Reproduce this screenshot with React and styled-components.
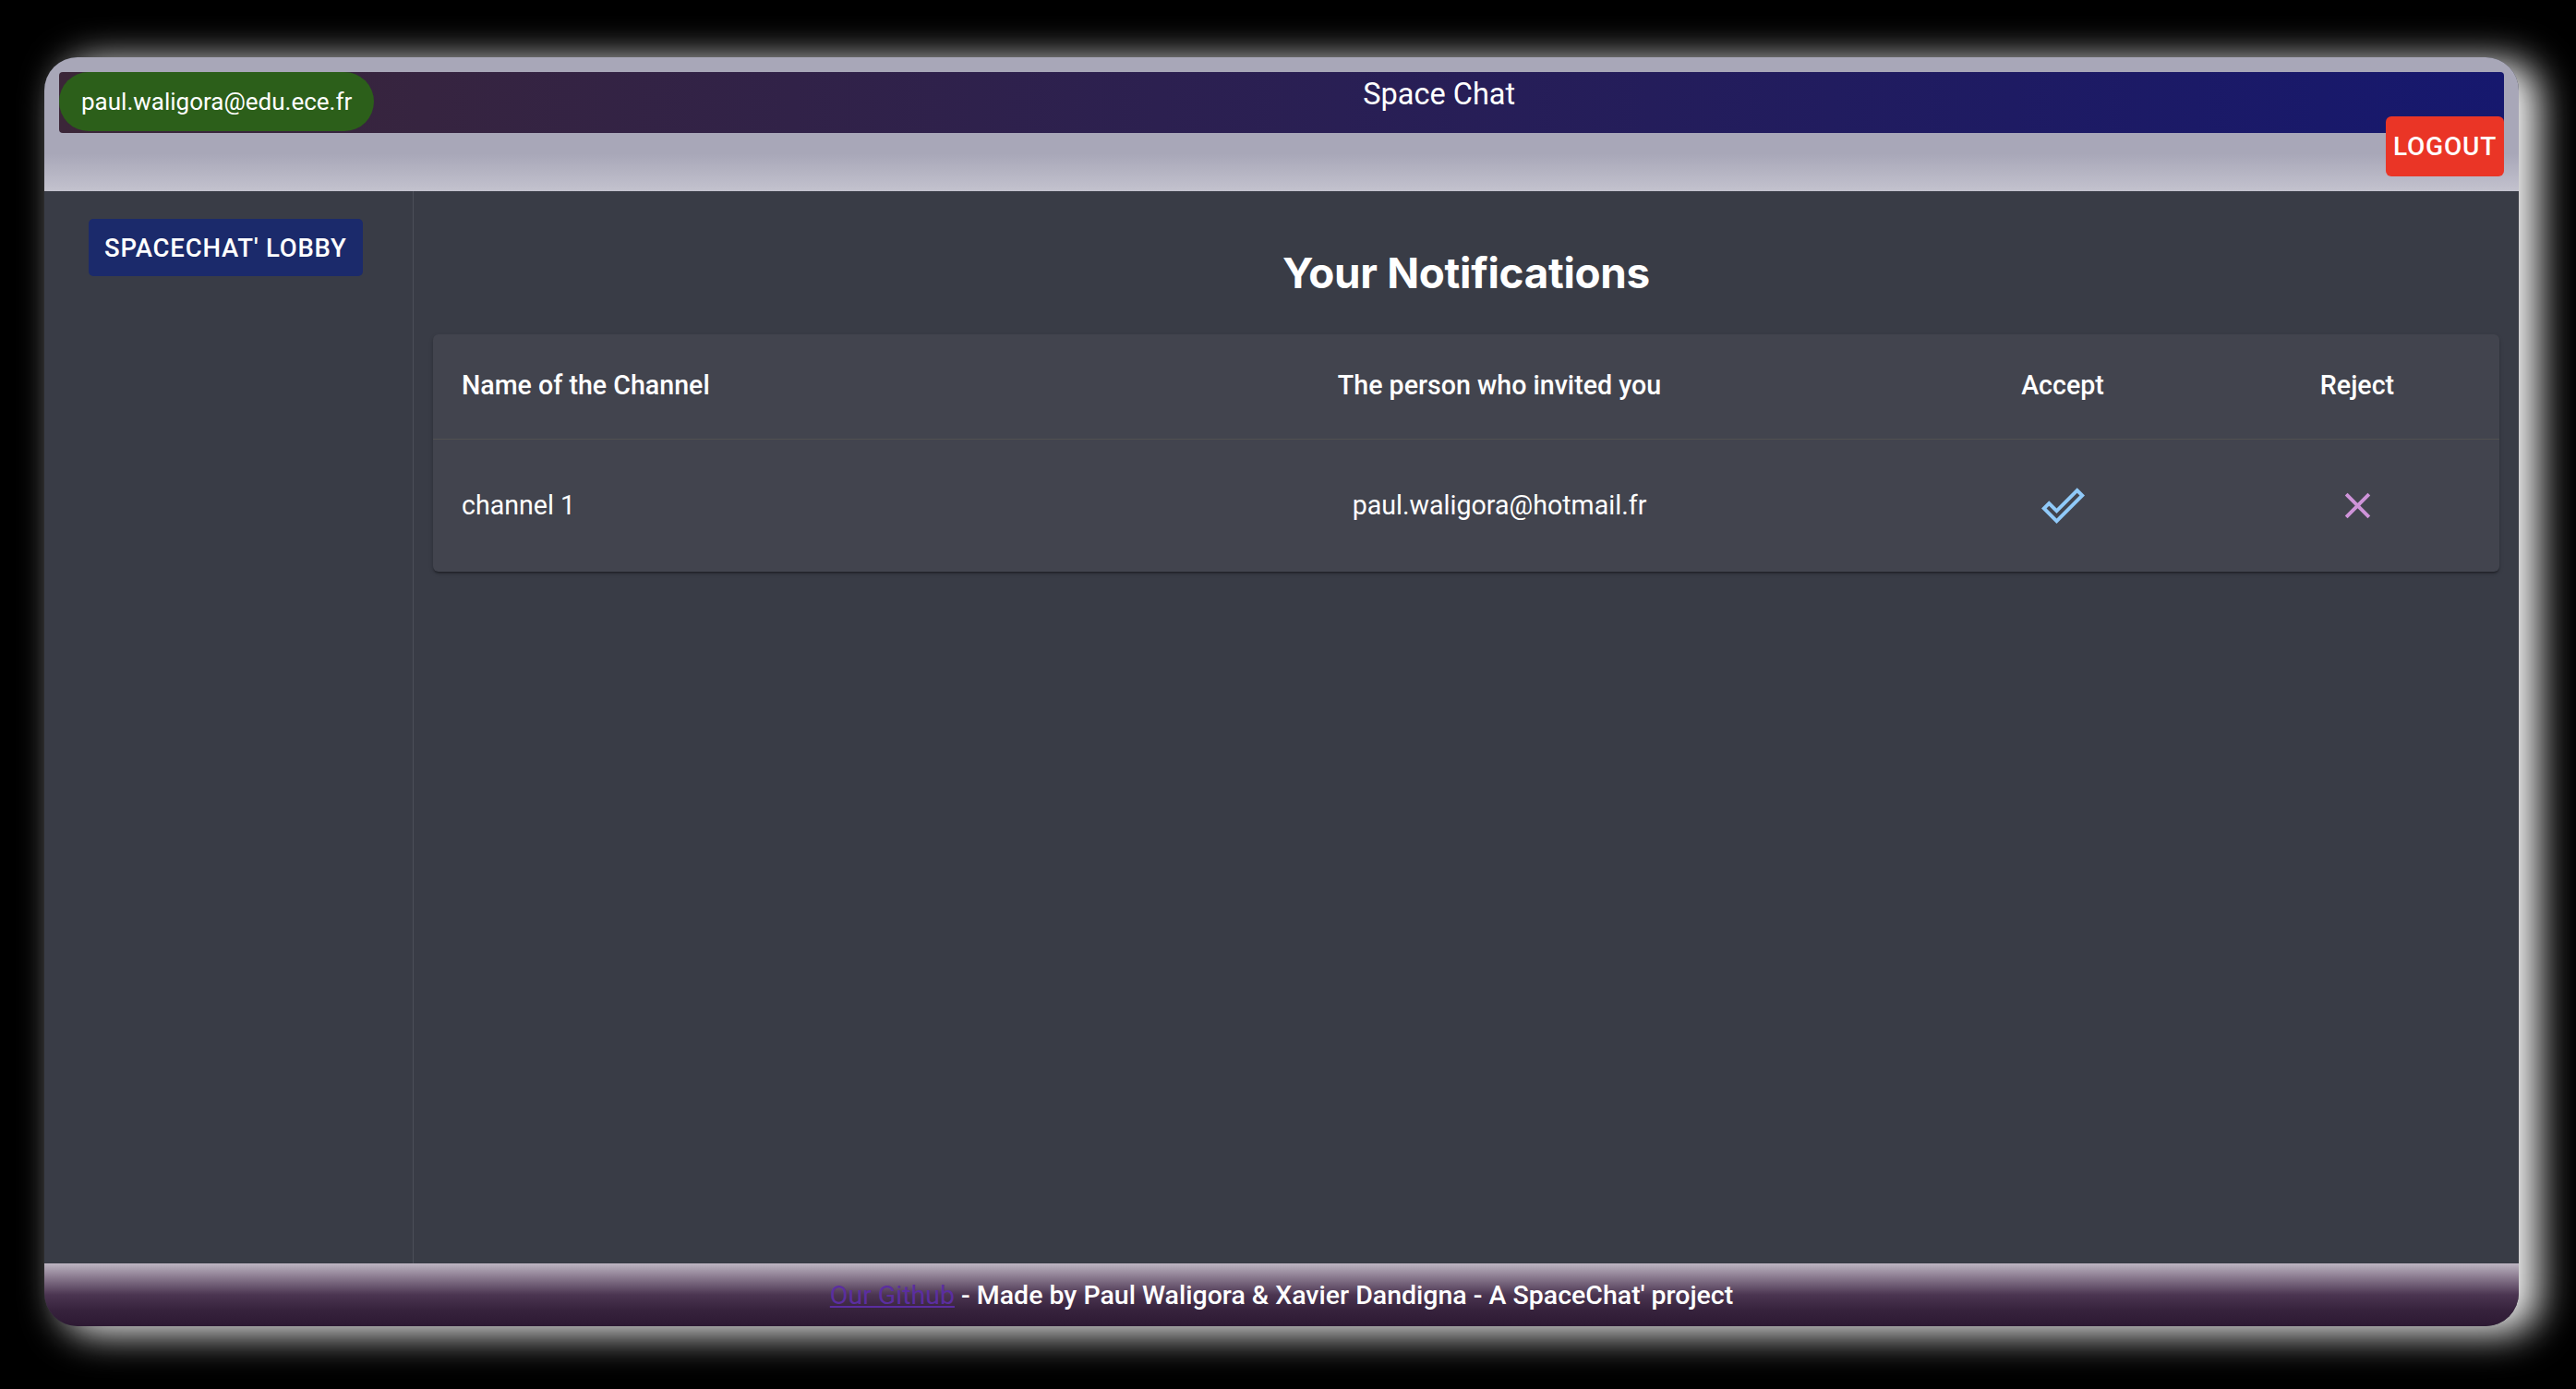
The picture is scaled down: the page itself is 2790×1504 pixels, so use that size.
import React from 'react';
import styled, { createGlobalStyle } from 'styled-components';

const GlobalStyle = createGlobalStyle`
  html, body {
    margin: 0;
    padding: 0;
    background: #000;
    font-family: Roboto, "Noto Sans", sans-serif;
    color: #fff;
  }
  * { box-sizing: border-box; }
`

const Page = styled.div`
  min-height: 100vh;
  display: flex;
  padding: 62px 62px 68px 48px;
  background: #000;
`
const Frame = styled.div`
  flex: 1;
  display: flex;
  flex-direction: column;
  border-radius: 36px;
  overflow: hidden;
  background: #393c46;
  box-shadow: 20px 6px 40px 2px rgba(255, 255, 255, 0.95);
`
const Header = styled.header`
  display: flex;
  flex-direction: column;
  padding: 16px;
  background: linear-gradient(180deg, #a8a7b8 0%, #a8a7b8 72%, #c3c2ce 100%);
`
const Bar = styled.div`
  display: flex;
  align-items: flex-start;
  height: 66px;
  border-radius: 4px;
  background: linear-gradient(90deg, #3b2638 0%, #2c2050 45%, #16186e 100%);
`
const UserPill = styled.div`
  height: 64px;
  display: flex;
  align-items: center;
  padding: 0 24px;
  border-radius: 32px;
  background: #2c5f1a;
  font-size: 26px;
  color: #fff;
`
const AppTitle = styled.div`
  flex: 1;
  text-align: center;
  padding-top: 5px;
  font-size: 32.5px;
  line-height: 38px;
  color: #fff;
`
const Button = styled.button`
  border: none;
  font-family: Roboto, sans-serif;
  font-weight: 500;
  text-transform: uppercase;
  letter-spacing: 0.8px;
  color: #fff;
  cursor: pointer;
  background: ${p => p.$bg};
  font-size: ${p => p.$size};
  height: ${p => p.$height};
  padding: 0 ${p => p.$pad};
  border-radius: ${p => p.$radius};
`
const LogoutButton = styled(Button)`
  align-self: flex-end;
  margin-top: -18px;
`
const Body = styled.div`
  flex: 1;
  display: flex;
`
const Sidebar = styled.aside`
  width: 400px;
  padding: 30px 0 0 48px;
  border-right: 1px solid #4c4f59;
`
const Main = styled.main`
  flex: 1;
  padding: 0 21px;
`
const Title = styled.h1`
  margin: 61px 0 38px;
  text-align: center;
  font-family: Inter, Roboto, sans-serif;
  font-weight: 700;
  font-size: 45.8px;
  line-height: 56px;
  letter-spacing: -0.3px;
`
const Card = styled.div`
  background: #42444e;
  border-radius: 6px;
  overflow: hidden;
  box-shadow: 0 3px 2px -2px rgba(0,0,0,0.25), 0 2px 2px 0 rgba(0,0,0,0.16), 0 2px 5px 0 rgba(0,0,0,0.14);
`
const Table = styled.table`
  width: 100%;
  border-collapse: collapse;
  table-layout: fixed;
`
const Th = styled.th`
  height: 113px;
  padding: 0 31px 2px;
  border-bottom: 1px solid #515151;
  font-size: 28.6px;
  font-weight: 500;
  text-align: ${p => p.$align || 'center'};
`
const Td = styled.td`
  height: 144px;
  padding: 0 31px;
  font-size: 28.6px;
  vertical-align: middle;
  text-align: ${p => p.$align || 'center'};
`
const IconButton = styled.button`
  display: inline-flex;
  vertical-align: middle;
  align-items: center;
  justify-content: center;
  margin-top: 1px;
  padding: 0;
  border: none;
  background: transparent;
  cursor: pointer;
  color: ${p => p.$color};
  svg { width: 47px; height: 47px; fill: currentColor; display: block; }
`
const Footer = styled.footer`
  height: 68px;
  display: flex;
  align-items: center;
  justify-content: center;
  background: linear-gradient(180deg, #bdb5c2 0%, #8a7a8f 22%, #4b3551 50%, #36223c 75%, #2d1933 100%);
  font-size: 28.5px;
  font-weight: 500;
  color: #fff;
  white-space: pre;
`
const GithubLink = styled.a`
  color: #5b2ea0;
  text-decoration: underline;
  font-weight: 400;
`

const DoneOutline = () => (
  <svg viewBox="0 0 24 24">
    <path d="M19.77 5.03l1.4 1.4L8.43 19.17l-5.6-5.6 1.4-1.4 4.2 4.2L19.77 5.03m0-2.83L8.43 13.54l-4.2-4.2L0 13.57 8.43 22 24 6.43l-4.23-4.23z" />
  </svg>
)
const Clear = () => (
  <svg viewBox="0 0 24 24">
    <path d="M19 6.41 17.59 5 12 10.59 6.41 5 5 6.41 10.59 12 5 17.59 6.41 19 12 13.41 17.59 19 19 17.59 13.41 12z" />
  </svg>
)

const notifications = [
  { channel: 'channel 1', from: 'paul.waligora@hotmail.fr' },
]

export default function App() {
  return (
    <>
      <GlobalStyle />
      <Page>
        <Frame>
          <Header>
            <Bar>
              <UserPill>paul.waligora@edu.ece.fr</UserPill>
              <AppTitle>Space Chat</AppTitle>
            </Bar>
            <LogoutButton $bg="#ea3526" $size="28px" $height="65px" $pad="8px" $radius="6px">
              Logout
            </LogoutButton>
          </Header>
          <Body>
            <Sidebar>
              <Button $bg="#1b2a6b" $size="27.5px" $height="62px" $pad="17px" $radius="5px">
                SpaceChat' Lobby
              </Button>
            </Sidebar>
            <Main>
              <Title>Your Notifications</Title>
              <Card>
                <Table>
                  <colgroup>
                    <col style={{ width: 710 }} />
                    <col style={{ width: 890 }} />
                    <col style={{ width: 330 }} />
                    <col style={{ width: 308 }} />
                  </colgroup>
                  <thead>
                    <tr>
                      <Th $align="left">Name of the Channel</Th>
                      <Th>The person who invited you</Th>
                      <Th>Accept</Th>
                      <Th>Reject</Th>
                    </tr>
                  </thead>
                  <tbody>
                    {notifications.map(n => (
                      <tr key={n.channel}>
                        <Td $align="left">{n.channel}</Td>
                        <Td>{n.from}</Td>
                        <Td>
                          <IconButton $color="#90caf9"><DoneOutline /></IconButton>
                        </Td>
                        <Td>
                          <IconButton $color="#ce93d8"><Clear /></IconButton>
                        </Td>
                      </tr>
                    ))}
                  </tbody>
                </Table>
              </Card>
            </Main>
          </Body>
          <Footer>
            <GithubLink href="#">Our Github</GithubLink>
            {' - Made by Paul Waligora & Xavier Dandigna - A SpaceChat\' project'}
          </Footer>
        </Frame>
      </Page>
    </>
  )
}
